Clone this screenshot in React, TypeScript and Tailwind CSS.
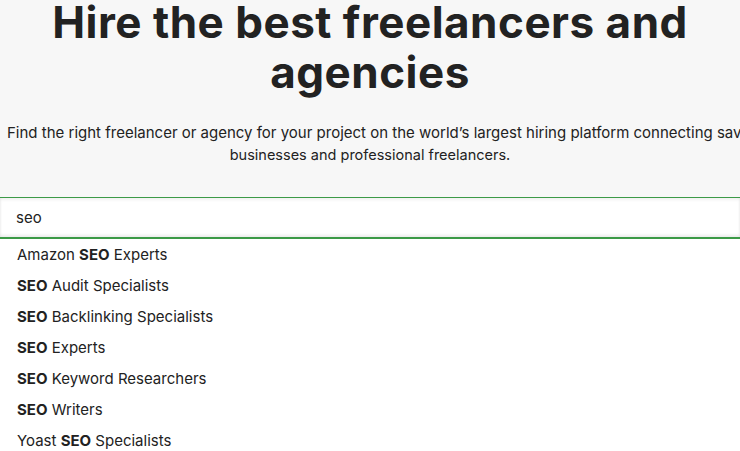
import React from "react";

const suggestions: [string, string, string][] = [
  ["Amazon ", "SEO", " Experts"],
  ["", "SEO", " Audit Specialists"],
  ["", "SEO", " Backlinking Specialists"],
  ["", "SEO", " Experts"],
  ["", "SEO", " Keyword Researchers"],
  ["", "SEO", " Writers"],
  ["Yoast ", "SEO", " Specialists"],
];

const font = { fontFamily: "Inter, 'Open Sans', sans-serif" };

const App: React.FC = () => {
  return (
    <div
      className="w-full h-[451px] overflow-hidden bg-white text-[#222]"
      style={font}
    >
      {/* hero */}
      <section className="bg-[#f7f7f7] h-[197px] overflow-hidden">
        <h1 className="text-center text-[44px] leading-[50px] font-bold tracking-[0.5px] px-[50px] mt-[-3px]">
          Hire the best freelancers and agencies
        </h1>
        <div className="mt-[25px] leading-[22px]">
          <p className="whitespace-nowrap pl-[7px] text-[15px]">
            Find the right freelancer or agency for your project on the world’s
            largest hiring platform connecting savvy
          </p>
          <p className="text-center text-[14.5px]">
            businesses and professional freelancers.
          </p>
        </div>
      </section>

      {/* search box */}
      <div className="border-t border-b-2 border-[#3c9a47] bg-white shadow-[inset_0_2px_3px_rgba(0,0,0,0.06),inset_0_-2px_3px_rgba(0,0,0,0.08)]">
        <div className="h-[39px] flex items-center pl-[16px] text-[15px] pt-[1px]">
          seo
        </div>
      </div>

      {/* suggestions */}
      <ul className="pt-[1px]">
        {suggestions.map(([before, bold, after], i) => (
          <li
            key={i}
            className="h-[31px] flex items-center pl-[17px] text-[15px]"
          >
            <span className="whitespace-pre">
              {before}
              <b className="font-bold">{bold}</b>
              {after}
            </span>
          </li>
        ))}
      </ul>
    </div>
  );
};

export default App;
